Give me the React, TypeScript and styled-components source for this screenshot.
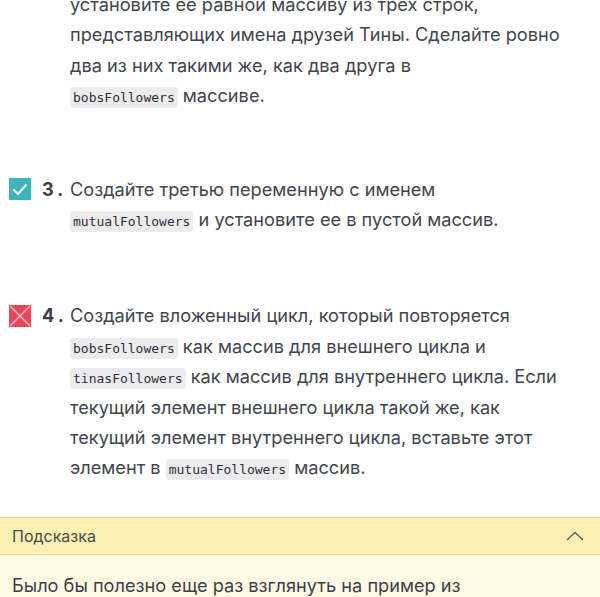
import React from 'react'
import styled, { createGlobalStyle } from 'styled-components'

const GlobalStyle = createGlobalStyle`
  body {
    margin: 0;
    background: #fff;
    font-family: Inter, "Noto Sans", sans-serif;
    color: #3c3f4a;
  }
`

const Page = styled.main`
  width: 600px;
  height: 597px;
  overflow: hidden;
`

const Steps = styled.ol`
  list-style: none;
  margin: -11px 0 0;
  padding: 0;
  display: flex;
  flex-direction: column;
`

const Step = styled.li<{ $gap?: number }>`
  display: grid;
  grid-template-columns: 42px 28px 1fr;
  padding-right: 24px;
  margin-top: ${p => p.$gap ?? 0}px;
  font-size: 18.2px;
  line-height: 30.4px;
`

const Mark = styled.span`
  display: flex;
  align-items: center;
  height: 30.4px;
  padding-left: 9px;
`

const Num = styled.span`
  font-weight: 700;
  letter-spacing: 4px;
  color: #3a3c46;
`

const Body = styled.span`
  color: #42454f;
`

const Code = styled.code`
  font-family: "DejaVu Sans Mono", monospace;
  font-size: 13px;
  line-height: 1;
  background: #ececef;
  color: #2f3036;
  padding: 3px 3px;
  border-radius: 3px;
`

const Hint = styled.section`
  margin-top: 34px;
  background: #fffae4;
`

const HintHeader = styled.div`
  display: flex;
  align-items: center;
  justify-content: space-between;
  height: 36px;
  padding: 0 16px 0 12px;
  background: #fdf0b3;
  border-top: 1px solid #f1de8d;
  border-bottom: 1px solid #f1de8d;
  font-size: 16px;
  color: #4a4a4a;
`

const HintText = styled.p`
  margin: 0;
  padding: 15px 12px 0;
  font-size: 18.2px;
  line-height: 30px;
  color: #3c3f4a;
`

function Check () {
  return (
    <svg width='22' height='22' viewBox='0 0 22 22'>
      <rect width='22' height='22' fill='#3db4b8' />
      <path d='M4.5 11.5 L9 16 L17.5 6.5' fill='none' stroke='#fff' strokeWidth='2' />
    </svg>
  )
}

function Cross () {
  return (
    <svg width='22' height='22' viewBox='0 0 22 22'>
      <rect width='22' height='22' fill='#e8475b' />
      <path d='M1 1 L21 21 M21 1 L1 21' stroke='#f7c9cf' strokeWidth='1.2' />
    </svg>
  )
}

function Chevron () {
  return (
    <svg width='18' height='10' viewBox='0 0 18 10'>
      <path d='M1 9 L9 1.5 L17 9' fill='none' stroke='#5c5c5c' strokeWidth='1.3' />
    </svg>
  )
}

export default function App () {
  return (
    <Page>
      <GlobalStyle />
      <Steps>
        <Step>
          <Mark />
          <span />
          <Body>
            установите ее равной массиву из трех строк, представляющих имена друзей Тины. Сделайте ровно два из них такими же, как два друга в
            <br />
            <Code>bobsFollowers</Code> массиве.
          </Body>
        </Step>
        <Step $gap={63}>
          <Mark><Check /></Mark>
          <Num>3.</Num>
          <Body>
            Создайте третью переменную с именем
            <br />
            <Code>mutualFollowers</Code> и установите ее в пустой массив.
          </Body>
        </Step>
        <Step $gap={66}>
          <Mark><Cross /></Mark>
          <Num>4.</Num>
          <Body>
            Создайте вложенный цикл, который повторяется <Code>bobsFollowers</Code> как массив для внешнего цикла и{' '}
            <Code>tinasFollowers</Code> как массив для внутреннего цикла. Если текущий элемент внешнего цикла такой же, как текущий элемент внутреннего цикла, вставьте этот элемент в{' '}
            <Code>mutualFollowers</Code> массив.
          </Body>
        </Step>
      </Steps>
      <Hint>
        <HintHeader>
          <span>Подсказка</span>
          <Chevron />
        </HintHeader>
        <HintText>Было бы полезно еще раз взглянуть на пример из</HintText>
      </Hint>
    </Page>
  )
}
